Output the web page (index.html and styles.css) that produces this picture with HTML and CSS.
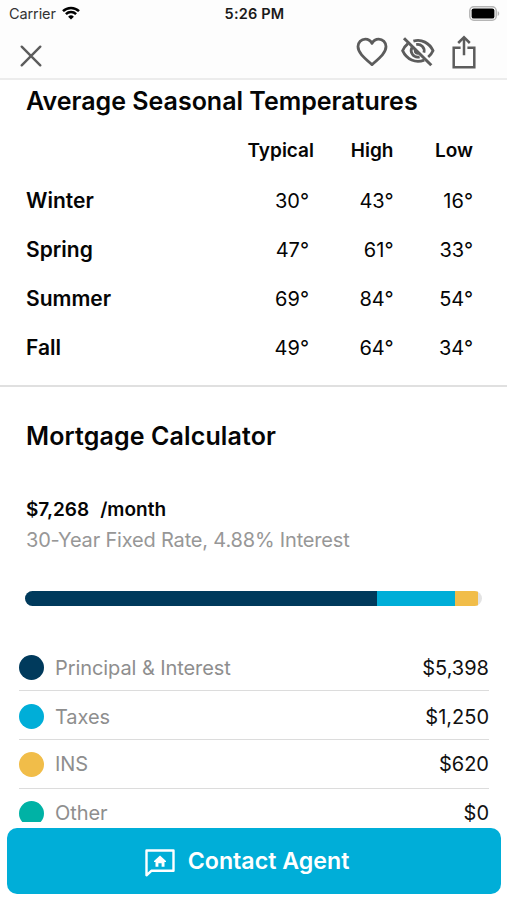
FILE: index.html
```html
<!DOCTYPE html>
<html lang="en">
<head>
  <meta charset="UTF-8">
  <title>Home Details</title>
  <link rel="stylesheet" href="styles.css">
</head>
<body>
  <div class="status-bar">
    <div class="carrier">
      <span>Carrier</span>
      <svg class="wifi" viewBox="0 0 18 14" fill="none" stroke="#000" stroke-width="2.5">
        <path d="M1 5.2a11.4 11.4 0 0 1 16 0"/>
        <path d="M3.9 8.2a7.3 7.3 0 0 1 10.2 0"/>
        <path d="M9 13.6L6.1 10.7a4.1 4.1 0 0 1 5.8 0z" fill="#000" stroke="none"/>
      </svg>
    </div>
    <div class="time">5:26 PM</div>
    <div class="battery-wrap">
      <svg class="battery" viewBox="0 0 31 15">
        <rect x=".8" y=".8" width="26.4" height="13.4" rx="4" fill="#fff" stroke="#b5b5b5" stroke-width="1.5"/>
        <rect x="2.6" y="2.4" width="22.8" height="10.2" rx="2.2" fill="#000"/>
        <path d="M28.7 5.2c2 .7 2 4 0 4.7z" fill="#b5b5b5"/>
      </svg>
    </div>
  </div>

  <div class="nav-bar">
    <svg class="icon-close" viewBox="0 0 22 22" fill="none" stroke="#5c5c5c" stroke-width="2.4" stroke-linecap="round">
      <path d="M1.7 1.7l18.6 18.6M20.3 1.7L1.7 20.3"/>
    </svg>
    <div class="nav-actions">
      <svg class="icon-heart" viewBox="0 0 32 30" fill="none" stroke="#5c5c5c" stroke-width="2.8" stroke-linejoin="round">
        <path d="M16 27.6C8 20.6 2 15.7 2 9.6C2 5.3 5.3 2.1 9.3 2.1C12 2.1 14.6 3.6 16 6.4C17.4 3.6 20 2.1 22.7 2.1C26.7 2.1 30 5.3 30 9.6C30 15.7 24 20.6 16 27.6z"/>
      </svg>
      <svg class="icon-hide" viewBox="0 0 34 30" fill="none" stroke="#5c5c5c" stroke-width="2.8">
        <path d="M12.4 4.2C20.5 1.7 28.5 6 32 13.7C30.9 16.2 29.2 18.3 27.2 20"/>
        <path d="M6.9 6.7C4.8 8.4 2.9 10.8 1.6 13.7C5.7 22.6 14.6 26.7 23.2 23.1"/>
        <path d="M15.2 7.6C19.7 6.4 24.3 10.7 22.9 15.6"/>
        <path d="M11 10.4C8.4 15.2 12.5 21.4 18.6 19.8"/>
        <path d="M14.8 11.5C12.8 14 14.8 16.8 17.4 16.3"/>
        <path d="M3 1.3L30.3 28.2" stroke-width="3"/>
      </svg>
      <svg class="icon-share" viewBox="0 0 24 34" fill="none" stroke="#5c5c5c" stroke-width="2.5">
        <path d="M8.6 12.7H1.7V32.3H22.3V12.7H15.4"/>
        <path d="M12 20.3V2.5M6.2 8L12 2.2L17.8 8"/>
      </svg>
    </div>
  </div>

  <div class="content">
    <section class="temperatures">
      <h2 class="heading temps-heading">Average Seasonal Temperatures</h2>
      <table class="temps-table">
        <thead>
          <tr><th></th><th>Typical</th><th>High</th><th>Low</th></tr>
        </thead>
        <tbody>
          <tr><td>Winter</td><td>30°</td><td>43°</td><td>16°</td></tr>
          <tr><td>Spring</td><td>47°</td><td>61°</td><td>33°</td></tr>
          <tr><td>Summer</td><td>69°</td><td>84°</td><td>54°</td></tr>
          <tr><td>Fall</td><td>49°</td><td>64°</td><td>34°</td></tr>
        </tbody>
      </table>
    </section>

    <section class="mortgage">
      <h2 class="heading mortgage-heading">Mortgage Calculator</h2>
      <div class="payment"><span>$7,268</span><span class="per-month">/month</span></div>
      <div class="rate">30-Year Fixed Rate, 4.88% Interest</div>
      <div class="bar">
        <div class="navy" style="width: 77.1%"></div>
        <div class="blue" style="width: 17.1%"></div>
        <div class="yellow" style="width: 5%"></div>
      </div>
      <ul class="costs">
        <li class="cost"><span class="dot navy"></span><span class="cost-name">Principal &amp; Interest</span><span class="amount">$5,398</span></li>
        <li class="cost"><span class="dot blue"></span><span class="cost-name">Taxes</span><span class="amount">$1,250</span></li>
        <li class="cost"><span class="dot yellow"></span><span class="cost-name">INS</span><span class="amount">$620</span></li>
        <li class="cost"><span class="dot teal"></span><span class="cost-name">Other</span><span class="amount">$0</span></li>
      </ul>
    </section>
  </div>

  <div class="footer">
    <button class="contact-button">
      <svg class="icon-agent" viewBox="0 0 30 28">
        <path d="M1.5 1.5H28.5V21.8H6.3L1.5 26.3z" fill="none" stroke="#fff" stroke-width="2.4" stroke-linejoin="round"/>
        <path d="M15 6.5L21 12V13H19.5V17.8H16.6V14.2H13.4V17.8H10.5V13H9V12z" fill="#fff"/>
      </svg>
      <span>Contact Agent</span>
    </button>
  </div>
</body>
</html>
```

FILE: styles.css
```css
* {
  box-sizing: border-box;
}

body {
  margin: 0;
  height: 900px;
  display: flex;
  flex-direction: column;
  overflow: hidden;
  background-color: #fff;
  color: #050505;
  font-family: Inter, "Liberation Sans", sans-serif;
}

svg {
  display: block;
  flex: none;
}

.status-bar {
  height: 28px;
  flex: none;
  display: grid;
  grid-template-columns: 1fr auto 1fr;
  align-items: center;
  padding: 0 7px 0 9px;
  background-color: #fdfdfd;
  font-size: 14.5px;
}

.carrier {
  display: flex;
  align-items: center;
  gap: 6px;
  margin-top: -2px;
  color: #333;
  letter-spacing: -0.1px;
}

.wifi {
  width: 18px;
  height: 14px;
}

.time {
  margin-top: -1px;
  font-weight: 600;
  letter-spacing: 0.2px;
  color: #1a1a1a;
}

.battery-wrap {
  display: flex;
  justify-content: flex-end;
  margin-top: -2px;
}

.battery {
  width: 31px;
  height: 15px;
}

.nav-bar {
  height: 52px;
  flex: none;
  display: flex;
  justify-content: space-between;
  align-items: center;
  padding: 0 31px 0 20px;
  background-color: #fdfdfd;
  border-bottom: 2px solid #ececec;
}

.icon-close {
  width: 22px;
  height: 22px;
  margin-top: 6px;
}

.nav-actions {
  display: flex;
  align-items: center;
  margin-top: -2px;
}

.icon-heart {
  width: 32px;
  height: 30px;
  margin-right: 13px;
}

.icon-hide {
  width: 34px;
  height: 30px;
  margin-right: 17px;
}

.icon-share {
  width: 24px;
  height: 34px;
}

.content {
  height: 742px;
  flex: none;
  overflow: hidden;
}

.temperatures {
  height: 307px;
  padding: 5px 34px 0 26px;
  border-bottom: 2px solid #e0e0e0;
}

.heading {
  margin: 0;
  font-size: 25px;
  line-height: 32px;
  font-weight: 600;
}

.temps-heading {
  white-space: nowrap;
}

.mortgage-heading {
  letter-spacing: 0.12px;
}

.temps-table {
  width: 100%;
  margin-top: 8px;
  table-layout: fixed;
  border-collapse: collapse;
  font-size: 20px;
}

.temps-table th,
.temps-table td {
  height: 49px;
  padding: 0;
  text-align: right;
}

.temps-table th {
  height: 51px;
  font-size: 19px;
  font-weight: 600;
}

.temps-table th:nth-child(2) {
  width: 80px;
}

.temps-table th:nth-child(3),
.temps-table th:nth-child(4) {
  width: 79.5px;
}

.temps-table td:first-child {
  text-align: left;
  font-size: 21px;
  font-weight: 600;
}

.temps-table td:nth-child(2) {
  padding-right: 5px;
}

.mortgage {
  padding: 33px 18px 0 19px;
}

.mortgage-heading,
.payment,
.rate {
  padding-left: 7px;
}

.payment {
  display: flex;
  gap: 11px;
  margin-top: 45px;
  font-size: 19px;
  line-height: 26px;
  font-weight: 600;
}

.rate {
  margin-top: 4px;
  font-size: 20px;
  line-height: 26px;
  letter-spacing: -0.18px;
  color: #979797;
}

.bar {
  display: flex;
  height: 15px;
  margin: 38px 7px 0 6px;
  border-radius: 8px;
  overflow: hidden;
  background-color: #e3e3e3;
}

.navy {
  background-color: #003a5c;
}

.blue {
  background-color: #00aed8;
}

.yellow {
  background-color: #f1bd49;
}

.teal {
  background-color: #00b2a5;
}

.costs {
  list-style: none;
  margin: 36px 0 0;
  padding: 0;
}

.cost {
  display: flex;
  align-items: center;
  height: 49px;
  border-bottom: 1px solid #dcdcdc;
  font-size: 20px;
  line-height: 18px;
}

.cost:nth-child(-n+2) {
  padding-top: 3px;
}

.dot {
  width: 25px;
  height: 25px;
  border-radius: 50%;
}

.cost-name {
  flex: 1;
  padding-left: 11px;
  letter-spacing: -0.08px;
  color: #8e8e8e;
}

.amount {
  color: #111;
}

.footer {
  padding: 6px 6px 0 7px;
}

.contact-button {
  display: flex;
  justify-content: center;
  align-items: center;
  gap: 13px;
  width: 100%;
  height: 66px;
  padding: 0 14px 0 0;
  border: none;
  border-radius: 10px;
  background-color: #00aed8;
  color: #fff;
  font-family: inherit;
  font-size: 23.2px;
  font-weight: 600;
}

.icon-agent {
  width: 30px;
  height: 28px;
  margin-top: 4px;
}
```
